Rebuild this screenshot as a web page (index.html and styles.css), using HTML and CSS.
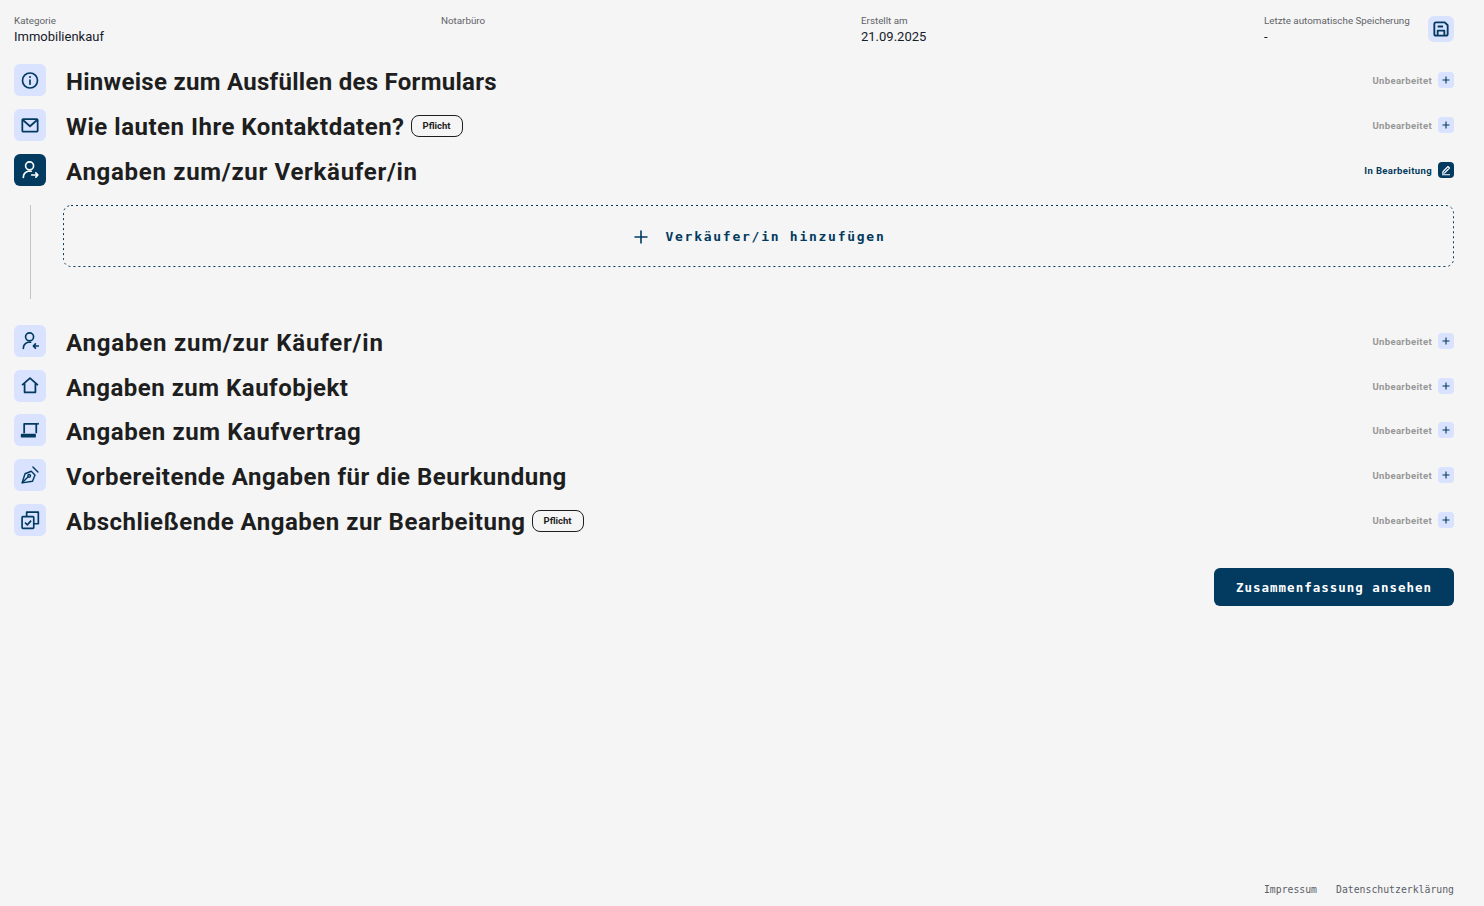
FILE: index.html
```html
<!DOCTYPE html>
<html lang="de">
<head>
<meta charset="utf-8">
<title>Immobilienkauf</title>
<link rel="stylesheet" href="styles.css">
</head>
<body>
<div class="page">
<header class="meta">
  <div class="meta-item"><div class="meta-label">Kategorie</div><div class="meta-value">Immobilienkauf</div></div>
  <div class="meta-item"><div class="meta-label">Notarbüro</div><div class="meta-value"></div></div>
  <div class="meta-item"><div class="meta-label">Erstellt am</div><div class="meta-value">21.09.2025</div></div>
  <div class="meta-item"><div class="meta-label">Letzte automatische Speicherung</div><div class="meta-value">-</div></div>
  <button class="save" aria-label="Speichern"><svg viewBox="0 0 24 24" width="20" height="20" fill="none" stroke="#023a60" stroke-width="2.2" stroke-linejoin="round"><path d="M4 6a2 2 0 0 1 2-2h10.500l3.500 3.500V18a2 2 0 0 1-2 2H6a2 2 0 0 1-2-2z"/><path d="M8 20v-6h8v6M8 9h6.500"/></svg></button>
</header>

<section class="row">
  <span class="icon"><svg viewBox="0 0 24 24" width="20" height="20" fill="none" stroke="#023a60" stroke-width="2" stroke-linecap="round"><circle cx="12" cy="12.600" r="9"/><path d="M12 12v5"/><path d="M12 8.300v.1" stroke-width="2.400"/></svg></span>
  <h2 class="title title-tight">Hinweise zum Ausfüllen des Formulars</h2>
  <div class="status"><span>Unbearbeitet</span><span class="toggle"><svg viewBox="0 0 16 16" width="16" height="16" stroke="#023a60" stroke-width="1.1"><path d="M8 4.500v7M4.500 8h7"/></svg></span></div>
</section>
<section class="row">
  <span class="icon"><svg viewBox="0 0 24 24" width="20" height="20" fill="none" stroke="#023a60" stroke-width="2.1" stroke-linejoin="round"><rect x="2.800" y="5" width="18.400" height="15" rx="1"/><path d="M3.500 6l8.500 7.500 8.500-7.500"/></svg></span>
  <h2 class="title">Wie lauten Ihre Kontaktdaten?</h2><span class="badge">Pflicht</span>
  <div class="status"><span>Unbearbeitet</span><span class="toggle"><svg viewBox="0 0 16 16" width="16" height="16" stroke="#023a60" stroke-width="1.1"><path d="M8 4.500v7M4.500 8h7"/></svg></span></div>
</section>
<section class="row">
  <span class="icon icon-active"><svg viewBox="0 0 24 24" width="20" height="20" fill="none" stroke="#fff" stroke-width="2" stroke-linecap="round" stroke-linejoin="round"><circle cx="11.500" cy="7" r="4.800"/><path d="M4 21c0-3.500 2.500-6.500 5.800-7.500h3.700"/><path d="M14 18h7.500M19 15.500l2.500 2.500-2.500 2.500"/></svg></span>
  <h2 class="title title-wide">Angaben zum/zur Verkäufer/in</h2>
  <div class="status status-active"><span>In Bearbeitung</span><span class="toggle toggle-active"><svg viewBox="0 0 16 16" width="16" height="16" fill="none" stroke="#fff" stroke-width="1.1" stroke-linejoin="round"><path d="M5 9.500l5-5 1.500 1.500-5 5-1.900.3zM4 12.700h8"/></svg></span></div>
</section>
<div class="detail">
  <div class="rail"></div>
  <button class="add"><svg class="dash" aria-hidden="true"><rect class="dash-rect"/></svg><svg viewBox="0 0 16 16" width="16" height="16" stroke="#023a60" stroke-width="1.600"><path d="M8 1.500v13M1.500 8h13"/></svg><span>Verkäufer/in hinzufügen</span></button>
</div>
<section class="row">
  <span class="icon"><svg viewBox="0 0 24 24" width="20" height="20" fill="none" stroke="#023a60" stroke-width="2" stroke-linecap="round" stroke-linejoin="round"><circle cx="11.500" cy="7" r="4.800"/><path d="M4 21c0-3.500 2.500-6.500 5.800-7.500h3"/><path d="M16 18h6M18.500 15.500L16 18l2.500 2.500"/></svg></span>
  <h2 class="title title-wider">Angaben zum/zur Käufer/in</h2>
  <div class="status"><span>Unbearbeitet</span><span class="toggle"><svg viewBox="0 0 16 16" width="16" height="16" stroke="#023a60" stroke-width="1.1"><path d="M8 4.500v7M4.500 8h7"/></svg></span></div>
</section>
<section class="row">
  <span class="icon"><svg viewBox="0 0 24 24" width="20" height="20" fill="none" stroke="#023a60" stroke-width="2.1" stroke-linejoin="round"><path d="M2.500 11L12 2.500l9.500 8.500M5.500 8.500V19.500h13V8.500"/></svg></span>
  <h2 class="title">Angaben zum Kaufobjekt</h2>
  <div class="status"><span>Unbearbeitet</span><span class="toggle"><svg viewBox="0 0 16 16" width="16" height="16" stroke="#023a60" stroke-width="1.1"><path d="M8 4.500v7M4.500 8h7"/></svg></span></div>
</section>
<section class="row">
  <span class="icon"><svg viewBox="0 0 24 24" width="20" height="20" fill="none" stroke="#023a60" stroke-width="2.100" stroke-linejoin="round"><path d="M5 16V4.500h16M19.500 4.500V16"/><path d="M21 4.500h.5v1" stroke-width="2.600"/><path d="M2 17.500h16v2.500H2z" fill="#023a60"/></svg></span>
  <h2 class="title title-loose">Angaben zum Kaufvertrag</h2>
  <div class="status"><span>Unbearbeitet</span><span class="toggle"><svg viewBox="0 0 16 16" width="16" height="16" stroke="#023a60" stroke-width="1.1"><path d="M8 4.500v7M4.500 8h7"/></svg></span></div>
</section>
<section class="row">
  <span class="icon"><svg viewBox="0 0 24 24" width="20" height="20" fill="none" stroke="#023a60" stroke-width="1.700" stroke-linecap="round" stroke-linejoin="round"><path d="M2.500 21.500l3.500-11 7.500-3 4.500 4.500-3 7.500z"/><path d="M3 21l6.500-6.500"/><circle cx="11" cy="13" r="1.600"/><path d="M15.500 2.500l6 6"/></svg></span>
  <h2 class="title">Vorbereitende Angaben für die Beurkundung</h2>
  <div class="status"><span>Unbearbeitet</span><span class="toggle"><svg viewBox="0 0 16 16" width="16" height="16" stroke="#023a60" stroke-width="1.1"><path d="M8 4.500v7M4.500 8h7"/></svg></span></div>
</section>
<section class="row">
  <span class="icon"><svg viewBox="0 0 24 24" width="20" height="20" fill="none" stroke="#023a60" stroke-width="2" stroke-linejoin="round"><rect x="2.500" y="8" width="14" height="14" rx="1"/><path d="M8 8V2.500h14v14h-5.500"/><path d="M6 15l2.800 2.800 4.500-5"/></svg></span>
  <h2 class="title">Abschließende Angaben zur Bearbeitung</h2><span class="badge">Pflicht</span>
  <div class="status"><span>Unbearbeitet</span><span class="toggle"><svg viewBox="0 0 16 16" width="16" height="16" stroke="#023a60" stroke-width="1.1"><path d="M8 4.500v7M4.500 8h7"/></svg></span></div>
</section>
<div class="actions"><button class="primary">Zusammenfassung ansehen</button></div>
<footer class="footer"><a>Impressum</a><a>Datenschutzerklärung</a></footer>
</div>
</body>
</html>
```
FILE: styles.css
```css
* { box-sizing: border-box; }
html, body { margin: 0; height: 100%; }
body { background: #f5f5f5; color: #1e1e1e; font-family: "Roboto", "Liberation Sans", sans-serif; }
.page { height: 906px; padding: 0 30px 0 14px; display: flex; flex-direction: column; }
.meta { display: grid; grid-template-columns: 427px 420px 403px 164px 26px; height: 64px; padding-top: 15px; align-items: start; }
.meta-label { font-size: 9.800px; line-height: 12px; color: #5f6368; height: 14px; }
.meta-value { font-size: 13px; line-height: 16px; color: #16202a; }
.save { width: 26px; height: 26px; margin: 1px 0 0; padding: 0; border: 0; border-radius: 6px; background: #d9e2ff; display: flex; align-items: center; justify-content: center; }
.row { display: flex; align-items: center; height: 32px; margin-bottom: 12.800px; }
.icon { width: 32px; height: 32px; flex: none; border-radius: 6px; background: #d9e2ff; display: flex; align-items: center; justify-content: center; margin-right: 20px; }
.icon-active { background: #023a60; }
.title { margin: 4px 0 0; font-size: 24px; line-height: 30px; font-weight: 700; color: #1e1e1e; letter-spacing: .5px; white-space: nowrap; }
.title-tight { letter-spacing: .28px; }
.title-loose { letter-spacing: .6px; }
.title-wide { letter-spacing: .7px; }
.title-wider { letter-spacing: .8px; }
.badge { margin-left: 6px; margin-top: 2px; width: 52px; height: 22px; border: 1px solid #1e1e1e; border-radius: 8px; font-size: 9.500px; font-weight: 700; display: flex; align-items: center; justify-content: center; }
.status { margin-left: auto; margin-top: 1px; display: flex; align-items: center; gap: 6px; font-size: 9.500px; letter-spacing: .37px; font-weight: 700; color: #979797; }
.status-active { color: #023a60; }
.toggle { width: 16px; height: 16px; margin-top: -1px; border-radius: 4px; background: #d9e2ff; display: flex; }
.toggle-active { background: #023a60; }
.detail { display: flex; height: 120px; margin-top: 6.400px; }
.rail { width: 1px; height: 94px; margin-left: 16px; background: #c4c4c4; }
.add { position: relative; margin-left: 32px; width: 1391px; height: 62px; padding: 2px 0 0 2px; border: 0; background: none; color: #023a60; font-family: "DejaVu Sans Mono", monospace; font-size: 13px; font-weight: 700; letter-spacing: 1.740px; display: flex; align-items: center; justify-content: center; gap: 16px; }
.dash { position: absolute; inset: 0; width: 100%; height: 100%; }
.dash-rect { x: .5px; y: .5px; width: calc(100% - 1px); height: calc(100% - 1px); rx: 7.500px; fill: none; stroke: #023a60; stroke-width: 1; stroke-dasharray: 2 3; }
.actions { display: flex; justify-content: flex-end; margin-top: 19px; }
.primary { width: 240px; height: 38px; padding: 2px 0 0; border: 0; border-radius: 6px; background: #023a60; color: #fff; font-family: "DejaVu Sans Mono", monospace; font-size: 12.500px; letter-spacing: 1px; font-weight: 700; }
.footer { margin-top: auto; height: 22px; display: flex; justify-content: flex-end; gap: 19px; font-family: "DejaVu Sans Mono", monospace; font-size: 9.800px; color: #5a6068; }
```
